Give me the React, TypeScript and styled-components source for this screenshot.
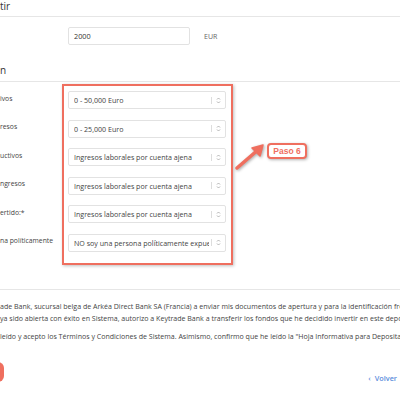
import React from "react";
import styled, { createGlobalStyle } from "styled-components";

const colors = {
  text: "#444",
  muted: "#666",
  line: "#e6e6e6",
  field: "#e2e2e2",
  mark: "#ef6f5f",
  link: "#5b8ddc",
};

const GlobalStyle = createGlobalStyle`
  html, body {
    margin: 0;
    background: #fff;
    overflow: hidden;
  }
  body {
    font-family: "Open Sans", "Liberation Sans", sans-serif;
    color: ${colors.text};
  }
`;

const Page = styled.div`
  width: 400px;
  height: 400px;
  overflow: hidden;
  display: flex;
  flex-direction: column;
`;

const SectionTitle = styled.h3<{ $top: number }>`
  margin: ${(p) => p.$top}px 0 0 0;
  font-size: 10px;
  line-height: 12px;
  font-weight: 400;
  color: #333;
`;

const Divider = styled.div<{ $top: number }>`
  margin-top: ${(p) => p.$top}px;
  height: 1px;
  background: ${colors.line};
  flex-shrink: 0;
`;

const AmountRow = styled.div`
  margin-top: 10px;
  display: grid;
  grid-template-columns: 68px 122px auto;
  align-items: center;
`;

const AmountInput = styled.input`
  box-sizing: border-box;
  height: 18px;
  width: 122px;
  padding: 0 5px;
  border: 1px solid ${colors.field};
  border-radius: 2px;
  font-family: inherit;
  font-size: 7.3px;
  color: #333;
  outline: none;
`;

const Currency = styled.span`
  margin-left: 14px;
  font-size: 7px;
  color: ${colors.muted};
`;

const FieldsArea = styled.div`
  position: relative;
  margin-top: 2px;
  display: grid;
  grid-template-columns: 62px 171px;
`;

const LabelColumn = styled.div`
  padding-top: 7px;
  display: flex;
  flex-direction: column;
  gap: 10.5px;
`;

const FieldLabel = styled.div`
  height: 18px;
  display: flex;
  align-items: center;
  margin-top: -2px;
  margin-bottom: 2px;
  font-size: 6.8px;
  white-space: nowrap;
  color: ${colors.text};
`;

const HighlightBox = styled.div`
  box-sizing: border-box;
  height: 181px;
  padding: 5px 5px 0 4px;
  border: 2px solid ${colors.mark};
  box-shadow: 1px 1px 3px rgba(0, 0, 0, 0.25);
  display: flex;
  flex-direction: column;
  gap: 10.5px;
`;

const SelectBox = styled.div`
  box-sizing: border-box;
  height: 18px;
  border: 1px solid ${colors.field};
  border-radius: 2px;
  background: #fff;
  display: flex;
  align-items: center;
  padding-left: 5px;
`;

const SelectValue = styled.span`
  flex: 1;
  overflow: hidden;
  white-space: nowrap;
  font-size: 7.1px;
  color: ${colors.text};
`;

const SelectHandle = styled.span`
  width: 13px;
  height: 7px;
  margin-left: 2px;
  border-left: 1px solid #ddd;
  display: flex;
  align-items: center;
  justify-content: center;
`;

const StepBadge = styled.div`
  position: absolute;
  left: 267px;
  top: 59px;
  box-sizing: border-box;
  width: 40px;
  height: 16px;
  border: 2px solid ${colors.mark};
  border-radius: 4px;
  background: #fff;
  box-shadow: 1px 1px 3px rgba(0, 0, 0, 0.3);
  display: flex;
  align-items: center;
  justify-content: center;
  font-family: "Liberation Sans", Arial, sans-serif;
  font-weight: 700;
  font-size: 8.5px;
  color: ${colors.mark};
`;

const Pointer = styled.svg`
  position: absolute;
  left: 232px;
  top: 58px;
  overflow: visible;
  filter: drop-shadow(1px 1px 1.5px rgba(0, 0, 0, 0.35));
`;

const Terms = styled.div`
  margin-top: 10px;
  display: flex;
  flex-direction: column;
  gap: 6px;
`;

const TermsParagraph = styled.p`
  margin: 0;
  font-size: 7.05px;
  line-height: 12px;
  white-space: nowrap;
  color: ${colors.text};
`;

const Footer = styled.div`
  margin-top: 20px;
  display: flex;
  justify-content: space-between;
  align-items: flex-end;
`;

const ContinueMark = styled.div`
  width: 60px;
  height: 20px;
  margin-left: -56px;
  border-radius: 6px;
  background: ${colors.mark};
  filter: blur(0.6px);
`;

const BackLink = styled.a`
  margin-right: 3px;
  margin-bottom: -2px;
  font-size: 7.3px;
  font-weight: 600;
  line-height: 12px;
  color: ${colors.link};
  text-decoration: none;
  display: flex;
  align-items: center;
  gap: 4px;
`;

const Arrows = () => (
  <svg width="5" height="7" viewBox="0 0 5 7">
    <path d="M1 2.5 L2.5 1 L4 2.5 M1 4.5 L2.5 6 L4 4.5" fill="none" stroke="#aaa" strokeWidth="0.9" />
  </svg>
);

const fields = [
  { label: "ivos", value: "0 - 50,000 Euro" },
  { label: "resos", value: "0 - 25,000 Euro" },
  { label: "uctivos", value: "Ingresos laborales por cuenta ajena" },
  { label: "ngresos", value: "Ingresos laborales por cuenta ajena" },
  { label: "ertido:*", value: "Ingresos laborales por cuenta ajena" },
  { label: "na políticamente", value: "NO soy una persona políticamente expuesta" },
];

const App = () => {
  return (
    <Page>
      <GlobalStyle />
      <SectionTitle $top={0}>tir</SectionTitle>
      <Divider $top={4} />
      <AmountRow>
        <span />
        <AmountInput defaultValue="2000" readOnly />
        <Currency>EUR</Currency>
      </AmountRow>
      <SectionTitle $top={19}>n</SectionTitle>
      <Divider $top={5} />

      <FieldsArea>
        <LabelColumn>
          {fields.map((f) => (
            <FieldLabel key={f.label}>{f.label}</FieldLabel>
          ))}
        </LabelColumn>
        <HighlightBox>
          {fields.map((f) => (
            <SelectBox key={f.label}>
              <SelectValue>{f.value}</SelectValue>
              <SelectHandle>
                <Arrows />
              </SelectHandle>
            </SelectBox>
          ))}
        </HighlightBox>
        <Pointer width="34" height="30" viewBox="0 0 34 30">
          <path d="M5 26 L27 7" stroke={colors.mark} strokeWidth="3.5" strokeLinecap="round" />
          <path d="M31 3 L20 6 L28 14 Z" fill={colors.mark} stroke={colors.mark} strokeWidth="1.5" strokeLinejoin="round" />
        </Pointer>
        <StepBadge>Paso 6</StepBadge>
      </FieldsArea>

      <Divider $top={24} />
      <Terms>
        <TermsParagraph>
          ade Bank, sucursal belga de Arkéa Direct Bank SA (Francia) a enviar mis documentos de apertura y para la identificación frente
          <br />
          ya sido abierta con éxito en Sistema, autorizo a Keytrade Bank a transferir los fondos que he decidido invertir en este depósito
        </TermsParagraph>
        <TermsParagraph>
          leído y acepto los Términos y Condiciones de Sistema. Asimismo, confirmo que he leído la "Hoja Informativa para Depositantes"
        </TermsParagraph>
      </Terms>

      <Footer>
        <ContinueMark />
        <BackLink href="#">
          <span>‹</span>
          Volver
        </BackLink>
      </Footer>
    </Page>
  );
};

export default App;
